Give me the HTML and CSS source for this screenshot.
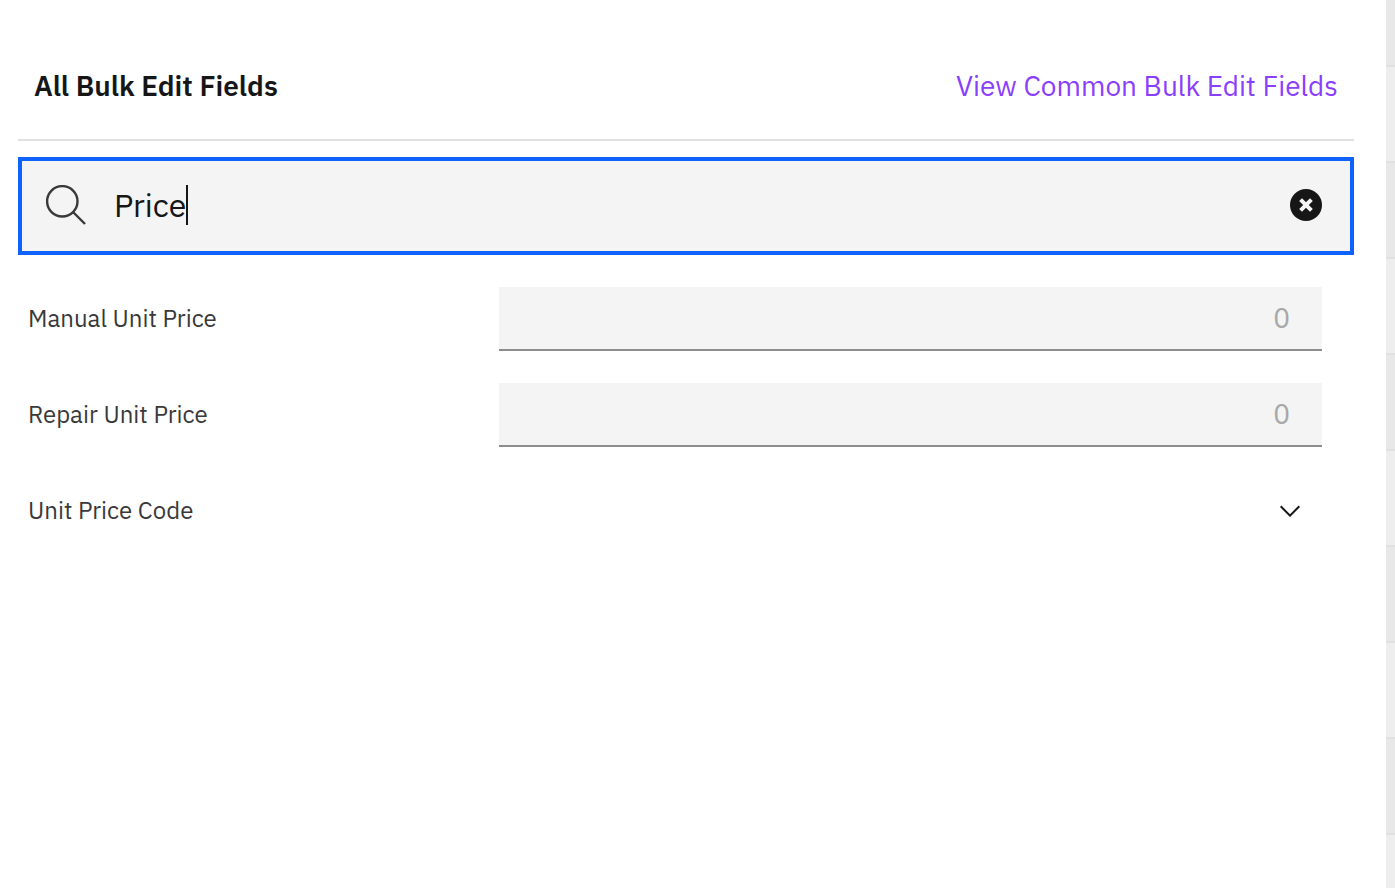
FILE: index.html
```html
<!DOCTYPE html>
<html lang="en">
<head>
  <meta charset="UTF-8">
  <meta name="viewport" content="width=device-width, initial-scale=1.0">
  <title>Bulk Edit Fields</title>
  <link rel="stylesheet" href="styles.css">
</head>
<body>
  <main class="panel">
    <header class="panel-header">
      <h1>All Bulk Edit Fields</h1>
      <a href="#">View Common Bulk Edit Fields</a>
    </header>
    <div class="search">
      <svg class="search-icon" viewBox="0 0 40 40" aria-hidden="true">
        <circle cx="16.3" cy="16.3" r="15.2"/>
        <path d="M27 27L39 39"/>
      </svg>
      <div class="search-field">
        <input type="text" value="Price" aria-label="Search fields">
        <span class="caret" aria-hidden="true"></span>
      </div>
      <button type="button" class="clear" aria-label="Clear search">
        <svg viewBox="0 0 32 32" aria-hidden="true">
          <circle cx="16" cy="16" r="16"/>
          <path d="M10.6 10.6L21.4 21.4M21.4 10.6L10.6 21.4"/>
        </svg>
      </button>
    </div>
    <form class="fields">
      <div class="field">
        <label for="manual">Manual Unit Price</label>
        <input type="text" id="manual" placeholder="0">
      </div>
      <div class="field">
        <label for="repair">Repair Unit Price</label>
        <input type="text" id="repair" placeholder="0">
      </div>
      <div class="field">
        <label for="code">Unit Price Code</label>
        <div class="dropdown">
          <select id="code"><option value=""></option></select>
          <svg viewBox="0 0 16 16" aria-hidden="true">
            <path d="M8 11L3 6l.7-.7L8 9.6l4.3-4.3.7.7z"/>
          </svg>
        </div>
      </div>
    </form>
  </main>
  <!-- edge of the table behind the panel -->
  <div class="backdrop" aria-hidden="true">
    <div></div><div></div><div></div><div></div><div></div>
    <div></div><div></div><div></div><div></div><div></div>
  </div>
</body>
</html>
```
FILE: styles.css
```css
* {
  margin: 0;
  padding: 0;
  box-sizing: border-box;
}
body {
  display: flex;
  height: 100vh;
  overflow: hidden;
  background: #fff;
  color: #161616;
  font-family: "IBM Plex Sans", "Noto Sans", sans-serif;
}
.panel {
  flex: 1;
  padding: 32px 32px 0 18px;
}
.panel-header {
  display: flex;
  justify-content: space-between;
  align-items: center;
  height: 109px;
  padding: 0 16px;
  border-bottom: 2px solid #e0e0e0;
}
.panel-header h1 {
  font-size: 28px;
  line-height: 36px;
  font-weight: 600;
}
.panel-header a {
  font-size: 28px;
  line-height: 36px;
  color: #8a3ffc;
  text-decoration: none;
}
.search {
  display: flex;
  align-items: center;
  margin-top: 16px;
  height: 98px;
  padding: 0 28px 2px 24px;
  border: 4px solid #0f62fe;
  background: #f4f4f4;
}
.search-icon {
  width: 40px;
  height: 40px;
  fill: none;
  stroke: #393939;
  stroke-width: 2.4;
}
.search-field {
  position: relative;
  flex: 1;
  margin-left: 28px;
}
.search-field input {
  width: 100%;
  height: 48px;
  border: none;
  outline: none;
  background: transparent;
  color: #161616;
  font-family: inherit;
  font-size: 32px;
}
.caret {
  position: absolute;
  left: 72px;
  top: 4px;
  width: 2px;
  height: 40px;
  background: #161616;
}
.clear {
  width: 32px;
  height: 32px;
  border: none;
  background: none;
  cursor: pointer;
}
.clear svg {
  display: block;
  fill: #161616;
  stroke: none;
}
.clear path {
  stroke: #f4f4f4;
  stroke-width: 4;
}
.fields {
  display: grid;
  gap: 32px;
  padding: 32px 32px 0 10px;
}
.field {
  display: grid;
  grid-template-columns: 4fr 7fr;
  align-items: center;
}
.field label {
  padding-bottom: 2px;
  color: #393939;
  font-size: 24px;
  line-height: 32px;
}
.field input {
  width: 100%;
  height: 64px;
  padding: 0 32px 2px;
  border: none;
  border-bottom: 2px solid #8d8d8d;
  background: #f4f4f4;
  font-family: inherit;
  font-size: 28px;
  text-align: right;
}
.field input::placeholder {
  color: #a8a8a8;
}
.dropdown {
  position: relative;
}
.dropdown select {
  display: block;
  width: 100%;
  height: 64px;
  appearance: none;
  border: none;
  background: transparent;
  font-family: inherit;
  font-size: 28px;
}
.dropdown svg {
  position: absolute;
  right: 16px;
  top: 16px;
  width: 32px;
  height: 32px;
  fill: #161616;
  pointer-events: none;
}
.backdrop {
  width: 9px;
}
.backdrop div {
  height: 96px;
  border-bottom: 2px solid #e0e0e0;
  background: #eee;
}
.backdrop div:nth-child(odd) {
  background: #e8e8e8;
}
.backdrop div:first-child {
  height: 67px;
}
```
